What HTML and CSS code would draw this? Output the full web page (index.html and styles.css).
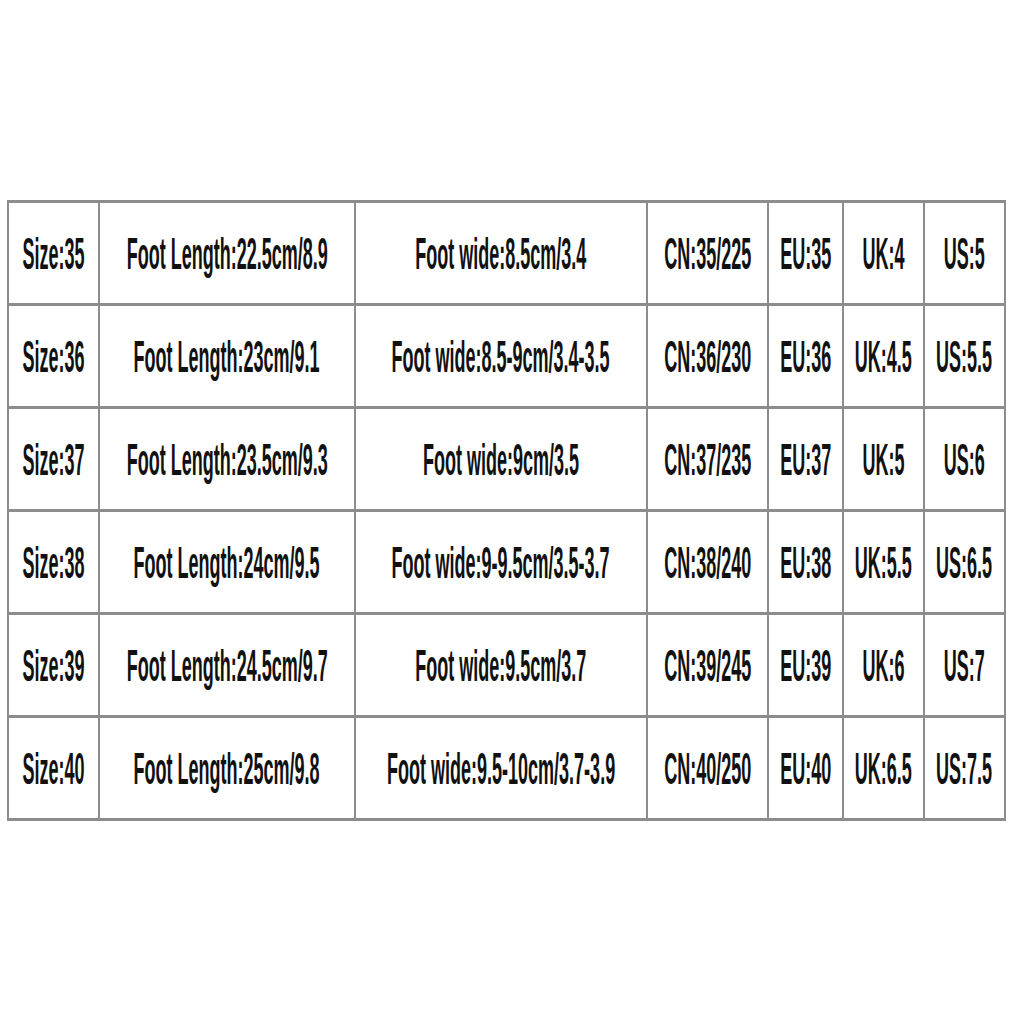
FILE: index.html
```html
<!DOCTYPE html>
<html>
<head>
<meta charset="utf-8">
<link rel="stylesheet" href="styles.css">
</head>
<body>
<div class="chart">
  <div class="cell"><span class="t">Size:35</span></div>
  <div class="cell"><span class="t">Foot Length:22.5cm/8.9</span></div>
  <div class="cell"><span class="t">Foot wide:8.5cm/3.4</span></div>
  <div class="cell"><span class="t">CN:35/225</span></div>
  <div class="cell"><span class="t">EU:35</span></div>
  <div class="cell"><span class="t">UK:4</span></div>
  <div class="cell"><span class="t">US:5</span></div>

  <div class="cell"><span class="t">Size:36</span></div>
  <div class="cell"><span class="t">Foot Length:23cm/9.1</span></div>
  <div class="cell"><span class="t">Foot wide:8.5-9cm/3.4-3.5</span></div>
  <div class="cell"><span class="t">CN:36/230</span></div>
  <div class="cell"><span class="t">EU:36</span></div>
  <div class="cell"><span class="t">UK:4.5</span></div>
  <div class="cell"><span class="t">US:5.5</span></div>

  <div class="cell"><span class="t">Size:37</span></div>
  <div class="cell"><span class="t">Foot Length:23.5cm/9.3</span></div>
  <div class="cell"><span class="t">Foot wide:9cm/3.5</span></div>
  <div class="cell"><span class="t">CN:37/235</span></div>
  <div class="cell"><span class="t">EU:37</span></div>
  <div class="cell"><span class="t">UK:5</span></div>
  <div class="cell"><span class="t">US:6</span></div>

  <div class="cell"><span class="t">Size:38</span></div>
  <div class="cell"><span class="t">Foot Length:24cm/9.5</span></div>
  <div class="cell"><span class="t">Foot wide:9-9.5cm/3.5-3.7</span></div>
  <div class="cell"><span class="t">CN:38/240</span></div>
  <div class="cell"><span class="t">EU:38</span></div>
  <div class="cell"><span class="t">UK:5.5</span></div>
  <div class="cell"><span class="t">US:6.5</span></div>

  <div class="cell"><span class="t">Size:39</span></div>
  <div class="cell"><span class="t">Foot Length:24.5cm/9.7</span></div>
  <div class="cell"><span class="t">Foot wide:9.5cm/3.7</span></div>
  <div class="cell"><span class="t">CN:39/245</span></div>
  <div class="cell"><span class="t">EU:39</span></div>
  <div class="cell"><span class="t">UK:6</span></div>
  <div class="cell"><span class="t">US:7</span></div>

  <div class="cell"><span class="t">Size:40</span></div>
  <div class="cell"><span class="t">Foot Length:25cm/9.8</span></div>
  <div class="cell"><span class="t">Foot wide:9.5-10cm/3.7-3.9</span></div>
  <div class="cell"><span class="t">CN:40/250</span></div>
  <div class="cell"><span class="t">EU:40</span></div>
  <div class="cell"><span class="t">UK:6.5</span></div>
  <div class="cell"><span class="t">US:7.5</span></div>
</div>
</body>
</html>
```

FILE: styles.css
```css
html, body {
  background: #ffffff;
}
body {
  margin: 0;
  padding: 200px 0 0 7px;
  font-family: "Liberation Sans", Arial, sans-serif;
}
.chart {
  display: grid;
  grid-template-columns: 91px 256px 292px 121px 75px 81px 81px;
  grid-auto-rows: 103px;
  width: max-content;
  border-top: 3px solid #8c8c8c;
  border-left: 2px solid #8c8c8c;
}
.cell {
  box-sizing: border-box;
  display: flex;
  align-items: center;
  justify-content: center;
  border-right: 2px solid #8c8c8c;
  border-bottom: 3px solid #8c8c8c;
  white-space: nowrap;
  min-width: 0;
}
.t {
  display: inline-block;
  flex: none;
  font-size: 45px;
  font-weight: bold;
  line-height: 1;
  color: #111111;
  transform: scaleX(0.4);
}
```
